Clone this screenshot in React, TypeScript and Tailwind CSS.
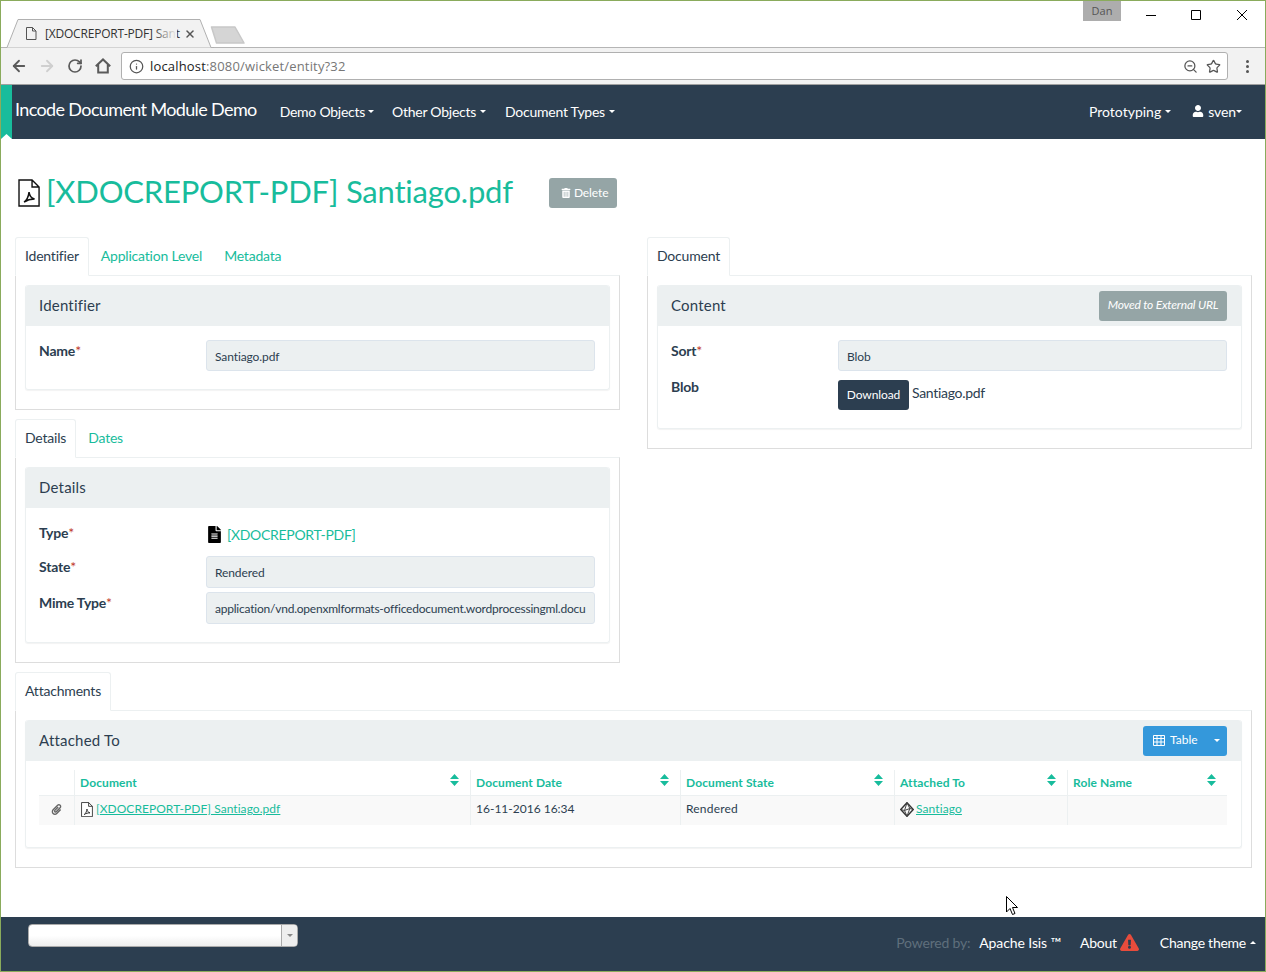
import React from "react";
import { ArrowLeft, ArrowRight, RotateCw, Info, ZoomOut, Star, X } from "lucide-react";
import { FaUser, FaTrashAlt, FaPaperclip, FaFileAlt, FaExclamationTriangle } from "react-icons/fa";

function PdfIcon({ s = 24 }: { s?: number }) {
  return (
    <svg width={s * 0.92} height={s * 1.17} viewBox="0 0 22 28" className="shrink-0">
      <path d="M1 1H14L21 8V27H1Z M14 1V8H21" fill="#fff" stroke="#111" strokeWidth="1.4" />
      <path d="M6 23C9 21 10.5 17 11 13C11.5 17 13 19 16.5 20C13 20 9 21 6 23Z" fill="none" stroke="#111" strokeWidth="1.5" />
    </svg>
  );
}

function Caret({ up = false, cls = "" }: { up?: boolean; cls?: string }) {
  return (
    <svg width="6" height="3" viewBox="0 0 6 3" className={cls}>
      <path d={up ? "M0 3L3 0L6 3Z" : "M0 0L3 3L6 0Z"} fill="currentColor" />
    </svg>
  );
}

function SortIcon() {
  return (
    <svg width="9" height="12" viewBox="0 0 9 12" className="shrink-0">
      <path d="M0 5L4.5 0L9 5Z M0 7L4.5 12L9 7Z" fill="#18bc9c" />
    </svg>
  );
}

function Tab({ label, active = false }: { label: string; active?: boolean }) {
  return active ? (
    <div className="relative z-10 -mb-px h-[39px] px-[9px] pt-[8px] bg-white border border-[#ecf0f1] border-b-white rounded-t-[3px] text-[#2c3e50] text-[14px] leading-[20px] tracking-[-0.2px]">
      {label}
    </div>
  ) : (
    <div className="h-[38px] px-[12px] pt-[9px] text-[#18bc9c] text-[14px] leading-[20px] tracking-[-0.2px]">{label}</div>
  );
}

function Label({ text, star = true }: { text: string; star?: boolean }) {
  return (
    <div className="w-[167px] shrink-0 pt-[1px] font-bold text-[#2c3e50] text-[14px] leading-[20px] tracking-[-0.2px]">
      {text}
      {star && <span className="font-normal text-[#c0392b]">*</span>}
    </div>
  );
}

function Input({ value, h = "h-[32px]", track = "tracking-[-0.1px]" }: { value: string; h?: string; track?: string }) {
  return (
    <div className={`${h} ${track} flex-1 min-w-0 bg-[#ecf0f1] border border-[#dce4ec] rounded-[3px] px-[8px] text-[12px] leading-[32px] text-[#2c3e50] whitespace-nowrap`}>
      {value}
    </div>
  );
}

function PanelHeader({ title, children }: { title: string; children?: React.ReactNode }) {
  return (
    <div className="h-[41px] bg-[#ecf0f1] rounded-t-[3px] pl-[13px] pr-[14px] flex items-center justify-between text-[#2c3e50] text-[15px] tracking-[0.2px]">
      <span>{title}</span>
      {children}
    </div>
  );
}

const cols = [
  { w: "w-[396px]", label: "Document" },
  { w: "w-[210px]", label: "Document Date" },
  { w: "w-[214px]", label: "Document State" },
  { w: "w-[173px]", label: "Attached To" },
  { w: "w-[160px]", label: "Role Name" },
];

export default function App() {
  return (
    <div
      className="relative w-[1266px] h-[972px] overflow-hidden border border-[#8aab5c] bg-white flex flex-col text-[#2c3e50]"
      style={{ fontFamily: "Lato, 'Open Sans', sans-serif" }}
    >
      {/* Window title strip */}
      <div className="h-[47px] shrink-0 flex border-b border-[#b5b5b5] bg-white">
        <div className="relative w-[208px] ml-[5px] mt-[18px] h-[29px]">
          <svg width="208" height="29" viewBox="0 0 208 29" className="absolute left-0 top-0">
            <path d="M0 28.5H1L12 .5H194L205 28.5H208" fill="#f2f2f2" stroke="#b0b0b0" />
          </svg>
          <div className="relative flex items-center h-[29px] pl-[20px] text-[12px] text-[#333]" style={{ fontFamily: "'Open Sans', sans-serif" }}>
            <svg width="11" height="13" viewBox="0 0 11 13" className="shrink-0">
              <path d="M.5.5H6.5L10 4V12.5H.5Z M6.5.5V4H10" fill="none" stroke="#555" />
            </svg>
            <span className="relative ml-[8px] w-[132px] whitespace-nowrap text-[12px] tracking-[-0.2px]">
              [XDOCREPORT-PDF] Sant
              <span className="absolute right-0 top-0 h-full w-[24px] bg-gradient-to-r from-transparent to-[#f2f2f2]" />
            </span>
            <X size={12} strokeWidth={3} className="ml-[7px] text-[#555]" />
          </div>
        </div>
        <svg width="38" height="20" viewBox="0 0 38 20" className="mt-[25px] -ml-[5px]">
          <path d="M2.5 1H26L35 17H7.5Z" fill="#d5d5d5" stroke="#c8c8c8" strokeWidth="1.5" strokeLinejoin="round" />
        </svg>
        <div className="flex-1" />
        <div className="self-start w-[38px] h-[20px] bg-[#adadad] text-center text-[11px] leading-[20px] text-[#555] mr-[25px]" style={{ fontFamily: "'Open Sans', sans-serif" }}>
          Dan
        </div>
        <div className="flex items-start pt-[8px] mr-[18px] text-black">
          <svg width="10" height="10" viewBox="0 0 10 10" className="mt-[1px]"><path d="M0 5.5H10" stroke="#000" /></svg>
          <svg width="10" height="10" viewBox="0 0 10 10" className="ml-[35px] mt-[1px]"><path d="M.5.5H9.5V9.5H.5Z" fill="none" stroke="#000" /></svg>
          <svg width="10" height="10" viewBox="0 0 10 10" className="ml-[36px] mt-[1px]"><path d="M0 0L10 10M10 0L0 10" stroke="#000" /></svg>
        </div>
      </div>

      {/* Toolbar */}
      <div className="h-[37px] shrink-0 bg-[#f2f2f2] border-b border-[#a0a0a0] flex items-center pl-[9px] pr-[16px]">
        <ArrowLeft size={18} strokeWidth={2.4} className="text-[#5a5a5a]" />
        <ArrowRight size={18} strokeWidth={2.4} className="ml-[10px] text-[#cfcfcf]" />
        <RotateCw size={16} strokeWidth={2.6} className="ml-[11px] text-[#5a5a5a]" />
        <svg width="16" height="16" viewBox="0 0 16 16" className="ml-[12px] shrink-0">
          <path d="M.8 8.2L8 1.4L15.2 8.2 M3.2 6.5V14.6H12.8V6.5" fill="none" stroke="#5a5a5a" strokeWidth="2" />
        </svg>
        <div className="ml-[10px] h-[28px] flex-1 bg-white border border-[#b0b0b0] rounded-[3px] flex items-center pl-[7px] pr-[6px]">
          <Info size={15} strokeWidth={2} className="text-[#555]" />
          <span className="ml-[6px] pt-[1px] text-[13px] tracking-[0.17px] text-[#222]" style={{ fontFamily: "'Open Sans', sans-serif" }}>
            localhost<span className="text-[#777]">:8080/wicket/entity?32</span>
          </span>
          <div className="flex-1" />
          <ZoomOut size={15} strokeWidth={2} className="text-[#555]" />
          <Star size={15} strokeWidth={2} className="ml-[8px] text-[#555]" />
        </div>
        <div className="ml-[18px] flex flex-col gap-[2px]">
          <span className="block w-[3px] h-[3px] rounded-full bg-[#555]" />
          <span className="block w-[3px] h-[3px] rounded-full bg-[#555]" />
          <span className="block w-[3px] h-[3px] rounded-full bg-[#555]" />
        </div>
      </div>

      {/* Navbar */}
      <div className="h-[54px] shrink-0 bg-[#2c3e50] flex items-center text-white">
        <div className="relative w-[11px] h-full bg-[#18bc9c] shrink-0">
          <svg width="11" height="5" viewBox="0 0 11 5" className="absolute left-0 bottom-0"><path d="M0 5L5.5 0L11 5Z" fill="#fff" /></svg>
        </div>
        <span className="ml-[3px] text-[18px] leading-[20px] -mt-[7px] tracking-[-0.63px]">Incode Document Module Demo</span>
        <div className="flex items-center text-[14px] tracking-[-0.25px] ml-[23px] -mt-[2px]">
          <span>Demo Objects</span><Caret cls="ml-[3px]" />
          <span className="ml-[18px]">Other Objects</span><Caret cls="ml-[4px]" />
          <span className="ml-[19px]">Document Types</span><Caret cls="ml-[4px]" />
        </div>
        <div className="flex-1" />
        <div className="flex items-center text-[14px] pr-[23px] -mt-[2px]">
          <span>Prototyping</span><Caret cls="ml-[4px]" />
          <FaUser size={12} className="ml-[21px]" />
          <span className="ml-[4px] tracking-[-0.1px]">sven</span><Caret />
        </div>
      </div>

      {/* Main */}
      <div className="flex-1 min-h-0 pl-[14px] pr-[13px]">
        {/* Heading */}
        <div className="h-[98px] flex items-center pt-[10px] pl-[3px]">
          <PdfIcon />
          <h1 className="ml-[6px] -mt-[4px] text-[31px] leading-[36px] text-[#18bc9c] whitespace-nowrap tracking-[-0.2px]">[XDOCREPORT-PDF] Santiago.pdf</h1>
          <div className="ml-[36px] w-[68px] h-[30px] rounded-[3px] bg-[#95a5a6] text-white text-[12px] flex items-center pl-[12px] gap-[3px] tracking-[-0.1px]">
            <FaTrashAlt size={10} />
            <span>Delete</span>
          </div>
        </div>

        <div className="flex gap-[27px]">
          {/* Left */}
          <div className="w-[605px] shrink-0">
            <div className="flex">
              <Tab label="Identifier" active />
              <Tab label="Application Level" />
              <div className="-ml-[2px]"><Tab label="Metadata" /></div>
            </div>
            <div className="h-[135px] border border-[#ddd] border-t-[#ecf0f1] px-[9px] pt-[9px]">
              <div className="h-[105px] rounded-[3px] border-b border-x border-[#ecf0f1] shadow-[0_1px_1px_rgba(0,0,0,0.05)]">
                <PanelHeader title="Identifier" />
                <div className="flex pl-[13px] pr-[14px] pt-[14px]">
                  <Label text="Name" />
                  <Input value="Santiago.pdf" h="h-[31px]" />
                </div>
              </div>
            </div>

            <div className="flex mt-[9px]">
              <Tab label="Details" active />
              <Tab label="Dates" />
            </div>
            <div className="h-[206px] border border-[#ddd] border-t-[#ecf0f1] px-[9px] pt-[9px]">
              <div className="h-[176px] rounded-[3px] border-b border-x border-[#ecf0f1] shadow-[0_1px_1px_rgba(0,0,0,0.05)]">
                <PanelHeader title="Details" />
                <div className="flex pl-[13px] pr-[14px] pt-[14px] h-[48px]">
                  <Label text="Type" />
                  <div className="flex items-center h-[24px]">
                    <FaFileAlt size={17} className="text-black" />
                    <span className="ml-[4px] text-[14px] text-[#18bc9c] tracking-[-0.3px]">[XDOCREPORT-PDF]</span>
                  </div>
                </div>
                <div className="flex pl-[13px] pr-[14px]">
                  <Label text="State" />
                  <Input value="Rendered" />
                </div>
                <div className="flex pl-[13px] pr-[14px] mt-[4px]">
                  <Label text="Mime Type" />
                  <Input value="application/vnd.openxmlformats-officedocument.wordprocessingml.docu" track="tracking-[-0.22px]" />
                </div>
              </div>
            </div>
          </div>

          {/* Right */}
          <div className="w-[605px] shrink-0">
            <div className="flex">
              <Tab label="Document" active />
            </div>
            <div className="h-[174px] border border-[#ddd] border-t-[#ecf0f1] px-[9px] pt-[9px]">
              <div className="h-[144px] rounded-[3px] border-b border-x border-[#ecf0f1] shadow-[0_1px_1px_rgba(0,0,0,0.05)]">
                <PanelHeader title="Content">
                  <div className="w-[128px] h-[30px] pb-[2px] rounded-[3px] bg-[#95a5a6] text-white text-[12px] italic flex items-center justify-center tracking-[-0.2px]">
                    Moved to External URL
                  </div>
                </PanelHeader>
                <div className="flex pl-[13px] pr-[14px] pt-[14px]">
                  <Label text="Sort" />
                  <Input value="Blob" h="h-[31px]" />
                </div>
                <div className="flex pl-[13px] pr-[14px] pt-[9px]">
                  <div className="-mt-[4px]"><Label text="Blob" star={false} /></div>
                  <div className="h-[30px] w-[71px] rounded-[3px] bg-[#2c3e50] text-white text-[12px] flex items-center justify-center shrink-0 tracking-[-0.1px]">Download</div>
                  <span className="ml-[3px] text-[14px] leading-[26px] tracking-[-0.3px]">Santiago.pdf</span>
                </div>
              </div>
            </div>
          </div>
        </div>

        {/* Attachments */}
        <div className="flex mt-[9px]">
          <Tab label="Attachments" active />
        </div>
        <div className="h-[158px] border border-[#ddd] border-t-[#ecf0f1] px-[9px] pt-[9px]">
          <div className="h-[128px] rounded-[3px] border-b border-x border-[#ecf0f1] shadow-[0_1px_1px_rgba(0,0,0,0.05)]">
            <PanelHeader title="Attached To">
              <div className="w-[84px] h-[30px] pb-[1px] rounded-[3px] bg-[#3498db] text-white text-[12px] flex items-center pl-[10px] tracking-normal">
                <svg width="12" height="11" viewBox="0 0 12 11" className="shrink-0">
                  <path d="M.5.5H11.5V10.5H.5Z M.5 3.5H11.5 M.5 7H11.5 M4 .5V10.5 M8 .5V10.5" fill="none" stroke="#fff" />
                </svg>
                <span className="ml-[5px]">Table</span>
                <Caret cls="ml-[16px]" />
              </div>
            </PanelHeader>
            <div className="ml-[13px] mr-[14px] mt-[9px] text-[12px]">
              <div className="flex h-[26px] border-b border-[#ecf0f1]">
                <div className="w-[35px] shrink-0" />
                {cols.map((c) => (
                  <div key={c.label} className={`${c.w} shrink-0 border-l border-[#ecf0f1] pl-[5px] pr-[11px] flex justify-between font-bold text-[#18bc9c] tracking-[0.1px]`}>
                    <span className="mt-[4px]">{c.label}</span>
                    <span className="mt-[4px]"><SortIcon /></span>
                  </div>
                ))}
              </div>
              <div className="flex h-[29px] bg-[#f9f9f9] leading-[26px]">
                <div className="w-[35px] shrink-0 flex items-center justify-center pb-[2px] text-[#666]"><FaPaperclip size={11} /></div>
                <div className="w-[396px] shrink-0 border-l border-[#ecf0f1] pl-[6px] flex items-start">
                  <span className="mt-[6px]"><PdfIcon s={13} /></span>
                  <span className="ml-[3px] text-[#18bc9c] underline tracking-[0.05px]">[XDOCREPORT-PDF] Santiago.pdf</span>
                </div>
                <div className="w-[210px] shrink-0 border-l border-[#ecf0f1] pl-[5px]">16-11-2016 16:34</div>
                <div className="w-[214px] shrink-0 border-l border-[#ecf0f1] pl-[5px] tracking-[0.2px]">Rendered</div>
                <div className="w-[173px] shrink-0 border-l border-[#ecf0f1] pl-[5px] flex items-start">
                  <svg width="14" height="15" viewBox="0 0 14 15" className="mt-[6px] shrink-0">
                    <path d="M7 .7L13.3 7.5L7 14.3L.7 7.5Z" fill="none" stroke="#333" strokeWidth="1.4" />
                    <path d="M7 .7L4.5 8.5L7 14.3 M7 .7L9.8 6.5L7 14.3 M.7 7.5L4.5 8.5L9.8 6.5L13.3 7.5" fill="none" stroke="#444" />
                  </svg>
                  <span className="ml-[2px] text-[#18bc9c] underline tracking-[0.1px]">Santiago</span>
                </div>
                <div className="w-[160px] shrink-0 border-l border-[#ecf0f1]" />
              </div>
            </div>
          </div>
        </div>
      </div>

      {/* Footer */}
      <div className="h-[54px] shrink-0 bg-[#2c3e50] flex items-start text-white text-[14px] tracking-[-0.25px] pl-[27px] pr-[9px]">
        <div className="mt-[7px] w-[270px] h-[23px] rounded-[4px] border border-[#aaa] bg-gradient-to-b from-white from-50% to-[#eeeeee] flex justify-end">
          <div className="w-[16px] border-l border-[#aaa] flex items-center justify-center text-[#888] bg-[#eee] rounded-r-[3px]">
            <Caret />
          </div>
        </div>
        <div className="flex-1" />
        <div className="flex items-center h-[50px]">
          <span className="text-[#5f6f7c] tracking-[-0.2px]">Powered by:</span>
          <span className="ml-[9px] tracking-[-0.1px]">Apache Isis ™</span>
          <span className="ml-[19px]">About</span>
          <FaExclamationTriangle size={19} className="ml-[3px] text-[#e74c3c]" />
          <span className="ml-[21px]">Change theme</span>
          <Caret up cls="ml-[4px]" />
        </div>
      </div>

      {/* Mouse pointer */}
      <svg width="13" height="20" viewBox="0 0 13 20" className="absolute left-[1005px] top-[895px]">
        <path d="M.5.5V16L4 12.5L6.5 18.5L9 17.5L6.5 11.5H11.5Z" fill="#fff" stroke="#000" />
      </svg>
    </div>
  );
}
